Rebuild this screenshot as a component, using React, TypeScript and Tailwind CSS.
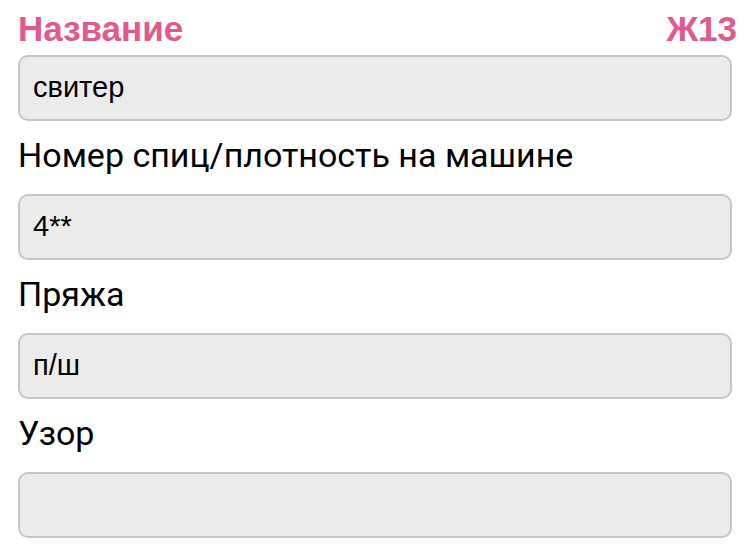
import React from "react";

const Field = ({ value }: { value: string }) => (
  <div className="h-[66px] rounded-[10px] border-2 border-[#c6c6c6] bg-[#ebebeb] flex items-center px-[13px] text-[29px] text-black font-['Liberation_Sans',Arial,sans-serif]">
    {value}
  </div>
);

const Label = ({ children }: { children: React.ReactNode }) => (
  <div className="mt-[14px] mb-[19px] h-[40px] leading-[40px] text-[34px] text-black font-['Roboto','Liberation_Sans',sans-serif]">
    {children}
  </div>
);

export default function App() {
  return (
    <div className="w-[750px] h-[554px] bg-white px-[18px] overflow-hidden">
      <div className="pt-[9px] mb-[6px] h-[49px] flex justify-between text-[35px] leading-[40px] font-bold text-[#e25a8c] font-['Liberation_Sans',Arial,sans-serif]">
        <span>Название</span>
        <span className="-mr-[5px]">Ж13</span>
      </div>
      <Field value="свитер" />
      <Label>Номер спиц/плотность на машине</Label>
      <Field value="4**" />
      <Label>Пряжа</Label>
      <Field value="п/ш" />
      <Label>Узор</Label>
      <Field value="" />
    </div>
  );
}
